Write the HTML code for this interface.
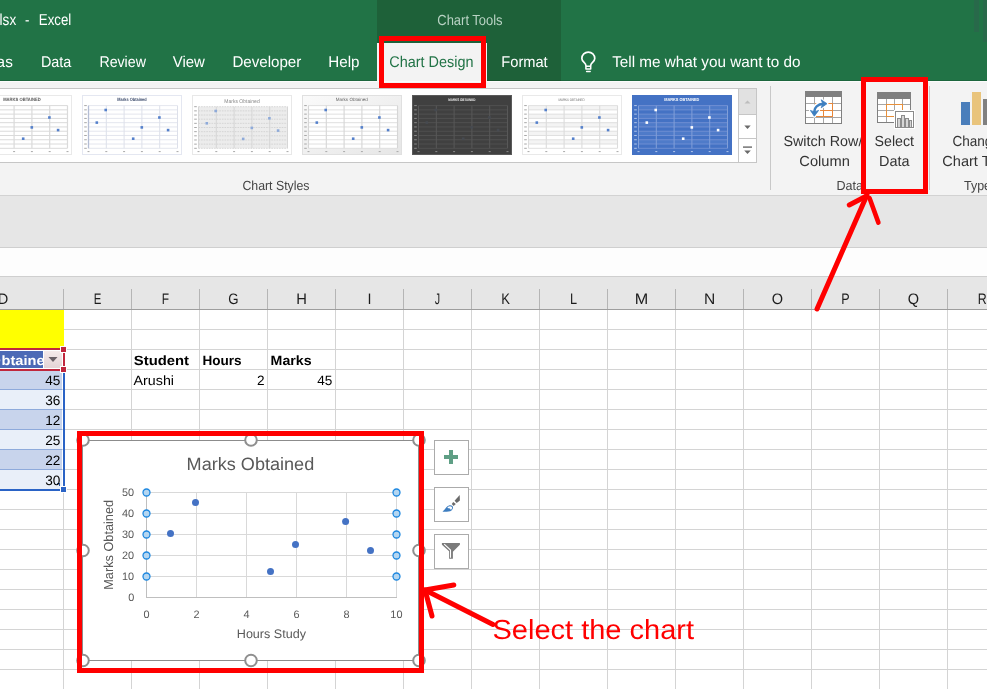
<!DOCTYPE html>
<html>
<head>
<meta charset="utf-8">
<title>Excel</title>
<style>
*{box-sizing:border-box;margin:0;padding:0}
html,body{width:987px;height:689px;overflow:hidden;background:#fff}
body{font-family:"Liberation Sans",sans-serif;position:relative;color:#222}
.abs{position:absolute}
svg text{text-rendering:geometricPrecision}
svg.abs{will-change:transform}
.t{position:absolute;white-space:nowrap;line-height:1;transform-origin:0 0}
#titlebar{left:0;top:0;width:987px;height:81px;background:#217346}
#charttools{left:377px;top:0;width:184px;height:81px;background:#1e6139}
#tabsel{left:377px;top:43px;width:110px;height:39px;background:#f3f3f3}
#ribbon{left:0;top:81px;width:987px;height:114px;background:#f3f3f3}
#ribbonline{left:0;top:195px;width:987px;height:1px;background:#d2d2d2}
#band{left:0;top:196px;width:987px;height:51px;background:#e6e6e6}
#fbar{left:0;top:247px;width:987px;height:30px;background:#fdfdfd;border-top:1px solid #cfcfcf;border-bottom:1px solid #cfcfcf}
#colhdr{left:0;top:277px;width:987px;height:32px;background:#e6e6e6}
#colhdrline{left:0;top:309px;width:987px;height:1px;background:#9e9e9e}
#grid{left:0;top:310px;width:987px;height:379px;background:#fff}
</style>
</head>
<body>
<div class="abs" id="titlebar"></div>
<div class="abs" id="charttools"></div>
<div class="abs" id="tabsel"></div>
<div class="abs" id="ribbon"></div>
<div class="abs" id="ribbonline"></div>
<div class="abs" id="band"></div>
<div class="abs" id="fbar"></div>
<div class="abs" id="colhdr"></div>
<div class="abs" id="colhdrline"></div>
<div class="abs" id="grid"></div>
<svg class="abs" style="left:0;top:0" width="987" height="689" viewBox="0 0 987 689" shape-rendering="crispEdges">
<g fill="#d4d4d4">
<rect x="63" y="310" width="1" height="379"/><rect x="131" y="310" width="1" height="379"/><rect x="199" y="310" width="1" height="379"/><rect x="267" y="310" width="1" height="379"/><rect x="335" y="310" width="1" height="379"/><rect x="403" y="310" width="1" height="379"/><rect x="471" y="310" width="1" height="379"/><rect x="539" y="310" width="1" height="379"/><rect x="607" y="310" width="1" height="379"/><rect x="675" y="310" width="1" height="379"/><rect x="743" y="310" width="1" height="379"/><rect x="811" y="310" width="1" height="379"/><rect x="879" y="310" width="1" height="379"/><rect x="947" y="310" width="1" height="379"/>
<rect x="0" y="329" width="987" height="1"/><rect x="0" y="349" width="987" height="1"/><rect x="0" y="369" width="987" height="1"/><rect x="0" y="389" width="987" height="1"/><rect x="0" y="409" width="987" height="1"/><rect x="0" y="429" width="987" height="1"/><rect x="0" y="449" width="987" height="1"/><rect x="0" y="469" width="987" height="1"/><rect x="0" y="489" width="987" height="1"/><rect x="0" y="509" width="987" height="1"/><rect x="0" y="529" width="987" height="1"/><rect x="0" y="549" width="987" height="1"/><rect x="0" y="569" width="987" height="1"/><rect x="0" y="589" width="987" height="1"/><rect x="0" y="609" width="987" height="1"/><rect x="0" y="629" width="987" height="1"/><rect x="0" y="649" width="987" height="1"/><rect x="0" y="669" width="987" height="1"/>
</g>
<g fill="#b5b5b5"><rect x="63" y="289" width="1" height="20"/><rect x="131" y="289" width="1" height="20"/><rect x="199" y="289" width="1" height="20"/><rect x="267" y="289" width="1" height="20"/><rect x="335" y="289" width="1" height="20"/><rect x="403" y="289" width="1" height="20"/><rect x="471" y="289" width="1" height="20"/><rect x="539" y="289" width="1" height="20"/><rect x="607" y="289" width="1" height="20"/><rect x="675" y="289" width="1" height="20"/><rect x="743" y="289" width="1" height="20"/><rect x="811" y="289" width="1" height="20"/><rect x="879" y="289" width="1" height="20"/><rect x="947" y="289" width="1" height="20"/></g>
</svg>

<svg class="abs" style="left:0;top:0" width="987" height="689" viewBox="0 0 987 689" font-family="Liberation Sans, sans-serif">
<defs><linearGradient id="ddg" x1="0" y1="0" x2="0" y2="1"><stop offset="0" stop-color="#f5eaea"/><stop offset="1" stop-color="#e4d4d6"/></linearGradient></defs>
<!-- yellow merged cell -->
<rect x="0" y="310" width="64" height="39" fill="#ffff00" shape-rendering="crispEdges"/>
<!-- table rows col D -->
<g shape-rendering="crispEdges">
<rect x="0" y="371" width="62" height="18" fill="#c8d4ec"/>
<rect x="0" y="389" width="62" height="1" fill="#8eaadb"/>
<rect x="0" y="390" width="62" height="19" fill="#e9eff9"/>
<rect x="0" y="409" width="62" height="1" fill="#8eaadb"/>
<rect x="0" y="410" width="62" height="19" fill="#c8d4ec"/>
<rect x="0" y="429" width="62" height="1" fill="#8eaadb"/>
<rect x="0" y="430" width="62" height="19" fill="#e9eff9"/>
<rect x="0" y="449" width="62" height="1" fill="#8eaadb"/>
<rect x="0" y="450" width="62" height="19" fill="#c8d4ec"/>
<rect x="0" y="469" width="62" height="1" fill="#8eaadb"/>
<rect x="0" y="470" width="62" height="19" fill="#e9eff9"/>
<!-- header cell -->
<rect x="0" y="350" width="63" height="20" fill="#ffffff"/>
<rect x="0" y="351" width="43" height="17" fill="#4c6ab6"/>
<rect x="44" y="351" width="18" height="17" fill="url(#ddg)"/>
<!-- crimson range outline -->
<rect x="0" y="348" width="62" height="2" fill="#c0273d"/>
<rect x="0" y="369" width="62" height="2" fill="#c0273d"/>
<rect x="63" y="353" width="2" height="13" fill="#c0273d"/>
<rect x="60" y="346" width="7" height="7" fill="#ffffff"/>
<rect x="61" y="347" width="5" height="5" fill="#c0273d"/>
<rect x="60" y="366" width="7" height="7" fill="#ffffff"/>
<rect x="61" y="367" width="5" height="5" fill="#c0273d"/>
<!-- blue range outline -->
<rect x="63" y="373" width="2" height="114" fill="#2a63c6"/>
<rect x="0" y="489" width="60" height="2" fill="#2a63c6"/>
<rect x="60" y="486" width="7" height="7" fill="#ffffff"/>
<rect x="61" y="487" width="5" height="5" fill="#2a63c6"/>
<path d="M57 483h3v3h-1v-2h-2z" fill="#2f5597"/>
</g>
<!-- dropdown arrow -->
<path d="M48.5 357 L57.5 357 L53 362 Z" fill="#6b6167"/>
<!-- header text -->
<clipPath id="hc"><rect x="0" y="351" width="43" height="17"/></clipPath>
<g clip-path="url(#hc)" font-size="13.5" font-weight="bold" fill="#ffffff"><text x="-8.6" y="364.7" textLength="9.2" lengthAdjust="spacingAndGlyphs">O</text><text x="1.6" y="364.7" textLength="43" lengthAdjust="spacingAndGlyphs">btaine</text></g>
<!-- numbers -->
<g font-size="13.6" fill="#000000" text-anchor="end">
<text x="60.4" y="384.8">45</text>
<text x="60.4" y="404.8">36</text>
<text x="60.4" y="424.8">12</text>
<text x="60.4" y="444.8">25</text>
<text x="60.4" y="464.8">22</text>
<text x="60.4" y="484.8">30</text>
<text x="264.5" y="384.8">2</text>
<text x="332.4" y="384.8">45</text>
</g>
<g font-size="13.4" fill="#000000">
<text x="133.8" y="364.6" font-weight="bold" textLength="55.2" lengthAdjust="spacingAndGlyphs">Student</text>
<text x="202.4" y="364.6" font-weight="bold" textLength="39.2" lengthAdjust="spacingAndGlyphs">Hours</text>
<text x="270.6" y="364.6" font-weight="bold" textLength="41" lengthAdjust="spacingAndGlyphs">Marks</text>
<text x="133.6" y="384.7" textLength="40.4" lengthAdjust="spacingAndGlyphs">Arushi</text>
</g>
<!-- column letters -->
<g font-size="15.2" fill="#1c1c1c" text-anchor="middle">
<text transform="translate(3 304.3) scale(0.960 1)">D</text>
<text transform="translate(97.5 304.3) scale(0.749 1)">E</text>
<text transform="translate(165.5 304.3) scale(0.788 1)">F</text>
<text transform="translate(233.5 304.3) scale(0.871 1)">G</text>
<text transform="translate(301.5 304.3) scale(0.970 1)">H</text>
<text transform="translate(369.5 304.3) scale(0.944 1)">I</text>
<text transform="translate(437.5 304.3) scale(0.705 1)">J</text>
<text transform="translate(505.5 304.3) scale(0.858 1)">K</text>
<text transform="translate(573.5 304.3) scale(0.836 1)">L</text>
<text transform="translate(641.5 304.3) scale(1.064 1)">M</text>
<text transform="translate(709.5 304.3) scale(1.022 1)">N</text>
<text transform="translate(777.5 304.3) scale(0.956 1)">O</text>
<text transform="translate(845.5 304.3) scale(0.829 1)">P</text>
<text transform="translate(913.5 304.3) scale(0.956 1)">Q</text>
<text transform="translate(982.3 304.3) scale(0.817 1)">R</text>
</g>
</svg>

<svg class="abs" style="left:0;top:0" width="987" height="689" viewBox="0 0 987 689" font-family="Liberation Sans, sans-serif">
<rect x="0" y="80" width="377" height="1" fill="#1c663d" shape-rendering="crispEdges"/>
<rect x="561" y="80" width="426" height="1" fill="#1c663d" shape-rendering="crispEdges"/>
<rect x="487" y="80" width="74" height="1" fill="#19552f" shape-rendering="crispEdges"/>
<!-- window control shading -->
<rect x="974" y="0" width="5" height="32" fill="#28694a" shape-rendering="crispEdges"/>
<rect x="983" y="0" width="4" height="42" fill="#28694a" shape-rendering="crispEdges"/>
<!-- title -->
<g font-size="15.8" fill="#ffffff">
<text x="-0.4" y="25" textLength="16.6" lengthAdjust="spacingAndGlyphs">lsx</text>
<text x="25" y="25" textLength="4.4" lengthAdjust="spacingAndGlyphs">-</text>
<text x="38.8" y="25" textLength="32.5" lengthAdjust="spacingAndGlyphs">Excel</text>
</g>
<text x="437.3" y="24.6" font-size="14.6" fill="#b9d3c4" textLength="65.3" lengthAdjust="spacingAndGlyphs">Chart Tools</text>
<!-- tabs -->
<g font-size="15.5" fill="#ffffff">
<text x="-3.4" y="66.8" textLength="16.2" lengthAdjust="spacingAndGlyphs">as</text>
<text x="40.9" y="66.8" textLength="30.4" lengthAdjust="spacingAndGlyphs">Data</text>
<text x="99.4" y="66.8" textLength="46.5" lengthAdjust="spacingAndGlyphs">Review</text>
<text x="172.8" y="66.8" textLength="32.1" lengthAdjust="spacingAndGlyphs">View</text>
<text x="232.4" y="66.8" textLength="68.9" lengthAdjust="spacingAndGlyphs">Developer</text>
<text x="328.3" y="66.8" textLength="31.2" lengthAdjust="spacingAndGlyphs">Help</text>
<text x="501.3" y="66.8" textLength="46.4" lengthAdjust="spacingAndGlyphs">Format</text>
<text x="612.2" y="66.8" textLength="188.4" lengthAdjust="spacingAndGlyphs">Tell me what you want to do</text>
</g>
<text x="389.3" y="66.6" font-size="15.5" fill="#217346" textLength="84.2" lengthAdjust="spacingAndGlyphs">Chart Design</text>
<!-- lightbulb -->
<g fill="none" stroke="#ffffff" stroke-linecap="round" stroke-linejoin="round">
<path d="M585.9 65.4 C585.9 62.6 581.85 62 581.85 58.5 A6.45 6.45 0 0 1 594.75 58.5 C594.75 62 590.7 62.6 590.7 65.4" stroke-width="1.7"/>
<rect x="585.9" y="66.2" width="4.8" height="2.8" stroke-width="1.5"/>
<path d="M586.6 71.5 H590.2" stroke-width="1.4"/>
</g>
</svg>

<svg class="abs" style="left:0;top:0" width="987" height="689" viewBox="0 0 987 689" font-family="Liberation Sans, sans-serif">
<g shape-rendering="crispEdges">
<!-- strip under green -->
<rect x="0" y="81" width="987" height="1" fill="#fbfbfb"/>
<!-- gallery box -->
<rect x="0" y="88" width="757" height="75" fill="#c6c6c6"/>
<rect x="0" y="89" width="738" height="73" fill="#ffffff"/>
<!-- scroll buttons -->
<rect x="739" y="89" width="17" height="25" fill="#e1e1e1"/>
<rect x="739" y="114" width="17" height="1" fill="#c6c6c6"/>
<rect x="739" y="115" width="17" height="23" fill="#ffffff"/>
<rect x="739" y="138" width="17" height="1" fill="#c6c6c6"/>
<rect x="739" y="139" width="17" height="23" fill="#ffffff"/>
<!-- group separators -->
<rect x="770" y="86" width="1" height="104" fill="#c8c8c8"/>
<rect x="929" y="86" width="1" height="104" fill="#c8c8c8"/>
</g>
<!-- scroll arrows -->
<path d="M744.5 103.5 L750.5 103.5 L747.5 100.5 Z" fill="#bdbdbd"/>
<path d="M744.3 125.5 L750.7 125.5 L747.5 129 Z" fill="#6a6a6a"/>
<rect x="743" y="146.4" width="9" height="1.4" fill="#6a6a6a"/>
<path d="M744.2 150.4 L750.8 150.4 L747.5 154 Z" fill="#6a6a6a"/>

<defs><linearGradient id="t4g" x1="0" y1="0" x2="1" y2="1"><stop offset="0" stop-color="#fafafa"/><stop offset="1" stop-color="#e6e6e6"/></linearGradient></defs>
<g>
<rect x="-27.5" y="95.5" width="99" height="59" fill="#ffffff" stroke="#e9e9e9" stroke-width="1"/>
<path d="M-21.5 105.60H67.5M-21.5 109.87H67.5M-21.5 114.14H67.5M-21.5 118.41H67.5M-21.5 122.68H67.5M-21.5 126.95H67.5M-21.5 131.22H67.5M-21.5 135.49H67.5M-21.5 139.76H67.5M-21.5 144.03H67.5M-21.5 148.30H67.5" stroke="#dadada" stroke-width="1.0" fill="none"/>
<path d="M-21.5 105.6V148.3M-3.7 105.6V148.3M14.1 105.6V148.3M31.9 105.6V148.3M49.7 105.6V148.3M67.5 105.6V148.3" stroke="#dadada" stroke-width="1.2" fill="none"/>
<path d="M-25.8 105.60h2.6M-25.8 109.87h2.6M-25.8 114.14h2.6M-25.8 118.41h2.6M-25.8 122.68h2.6M-25.8 126.95h2.6M-25.8 131.22h2.6M-25.8 135.49h2.6M-25.8 139.76h2.6M-25.8 144.03h2.6M-25.8 148.30h2.6M-22.5 151.6h2M-4.7 151.6h2M13.1 151.6h2M30.9 151.6h2M48.7 151.6h2M66.5 151.6h2" stroke="#a8a8a8" stroke-width="1" fill="none"/>
<rect x="-14.5" y="121.3" width="2.6" height="2.6" fill="#5580cb"/>
<rect x="-5.6" y="108.7" width="2.6" height="2.6" fill="#5580cb"/>
<rect x="21.9" y="137.4" width="2.6" height="2.6" fill="#5580cb"/>
<rect x="30.5" y="126.1" width="2.6" height="2.6" fill="#5580cb"/>
<rect x="48.1" y="116.2" width="2.6" height="2.6" fill="#5580cb"/>
<rect x="56.8" y="128.8" width="2.6" height="2.6" fill="#5580cb"/>
<text x="3.2" y="101.2" font-size="4.6" fill="#555555" font-weight="bold" textLength="37.5" lengthAdjust="spacingAndGlyphs">MARKS OBTAINED</text>
</g>
<g>
<rect x="82.5" y="95.5" width="99" height="59" fill="#ffffff" stroke="#e4e7f1" stroke-width="1"/>
<path d="M88.5 105.60H177.5M88.5 109.87H177.5M88.5 114.14H177.5M88.5 118.41H177.5M88.5 122.68H177.5M88.5 126.95H177.5M88.5 131.22H177.5M88.5 135.49H177.5M88.5 139.76H177.5M88.5 144.03H177.5M88.5 148.30H177.5" stroke="#dde0ea" stroke-width="0.8" fill="none"/>
<path d="M88.5 105.6V148.3M106.3 105.6V148.3M124.1 105.6V148.3M141.9 105.6V148.3M159.7 105.6V148.3M177.5 105.6V148.3" stroke="#dde0ea" stroke-width="1.0" fill="none"/>
<path d="M88.5 105.6V148.3" stroke="#b4bdd4" stroke-width="1.3" fill="none"/>
<path d="M84.2 105.60h2.6M84.2 109.87h2.6M84.2 114.14h2.6M84.2 118.41h2.6M84.2 122.68h2.6M84.2 126.95h2.6M84.2 131.22h2.6M84.2 135.49h2.6M84.2 139.76h2.6M84.2 144.03h2.6M84.2 148.30h2.6M87.5 151.6h2M105.3 151.6h2M123.1 151.6h2M140.9 151.6h2M158.7 151.6h2M176.5 151.6h2" stroke="#a8a8a8" stroke-width="1" fill="none"/>
<rect x="95.5" y="121.3" width="2.6" height="2.6" fill="#5580cb"/>
<rect x="104.4" y="108.7" width="2.6" height="2.6" fill="#5580cb"/>
<rect x="131.9" y="137.4" width="2.6" height="2.6" fill="#5580cb"/>
<rect x="140.5" y="126.1" width="2.6" height="2.6" fill="#5580cb"/>
<rect x="158.1" y="116.2" width="2.6" height="2.6" fill="#5580cb"/>
<rect x="166.8" y="128.8" width="2.6" height="2.6" fill="#5580cb"/>
<text x="117.3" y="101.2" font-size="4.6" fill="#3b4a6b" font-weight="bold" textLength="29.4" lengthAdjust="spacingAndGlyphs">Marks Obtained</text>
</g>
<g>
<rect x="192.5" y="95.5" width="99" height="59" fill="#ffffff" stroke="#e8e8e8" stroke-width="1"/>
<rect x="198.5" y="106.7" width="89.0" height="41.6" fill="#ececec"/>
<path d="M198.5 106.70H287.5M198.5 110.86H287.5M198.5 115.02H287.5M198.5 119.18H287.5M198.5 123.34H287.5M198.5 127.50H287.5M198.5 131.66H287.5M198.5 135.82H287.5M198.5 139.98H287.5M198.5 144.14H287.5M198.5 148.30H287.5" stroke="#cecece" stroke-width="0.8" fill="none" stroke-dasharray="1.6 1"/>
<path d="M198.5 106.7V148.3M216.3 106.7V148.3M234.1 106.7V148.3M251.9 106.7V148.3M269.7 106.7V148.3M287.5 106.7V148.3" stroke="#d6d6d6" stroke-width="1.0" fill="none"/>
<path d="M194.2 106.70h2.6M194.2 110.86h2.6M194.2 115.02h2.6M194.2 119.18h2.6M194.2 123.34h2.6M194.2 127.50h2.6M194.2 131.66h2.6M194.2 135.82h2.6M194.2 139.98h2.6M194.2 144.14h2.6M194.2 148.30h2.6M197.5 151.6h2M215.3 151.6h2M233.1 151.6h2M250.9 151.6h2M268.7 151.6h2M286.5 151.6h2" stroke="#a8a8a8" stroke-width="1" fill="none"/>
<rect x="205.5" y="122.0" width="2.6" height="2.6" fill="#8eaad9"/>
<rect x="214.4" y="109.7" width="2.6" height="2.6" fill="#8eaad9"/>
<rect x="241.9" y="137.6" width="2.6" height="2.6" fill="#8eaad9"/>
<rect x="250.5" y="126.6" width="2.6" height="2.6" fill="#8eaad9"/>
<rect x="268.1" y="117.0" width="2.6" height="2.6" fill="#8eaad9"/>
<rect x="276.8" y="129.3" width="2.6" height="2.6" fill="#8eaad9"/>
<text x="224.3" y="102.9" font-size="5.4" fill="#8a8a8a" textLength="35.4" lengthAdjust="spacingAndGlyphs">Marks Obtained</text>
</g>
<g>
<rect x="302.5" y="95.5" width="99" height="59" fill="url(#t4g)" stroke="#e0e0e0" stroke-width="1"/>
<rect x="308.5" y="105.6" width="89.0" height="42.7" fill="#ffffff"/>
<path d="M308.5 105.60H397.5M308.5 109.87H397.5M308.5 114.14H397.5M308.5 118.41H397.5M308.5 122.68H397.5M308.5 126.95H397.5M308.5 131.22H397.5M308.5 135.49H397.5M308.5 139.76H397.5M308.5 144.03H397.5M308.5 148.30H397.5" stroke="#dcdcdc" stroke-width="0.9" fill="none"/>
<path d="M308.5 105.6V148.3M326.3 105.6V148.3M344.1 105.6V148.3M361.9 105.6V148.3M379.7 105.6V148.3M397.5 105.6V148.3" stroke="#d6d6d6" stroke-width="1.1" fill="none"/>
<path d="M304.2 105.60h2.6M304.2 109.87h2.6M304.2 114.14h2.6M304.2 118.41h2.6M304.2 122.68h2.6M304.2 126.95h2.6M304.2 131.22h2.6M304.2 135.49h2.6M304.2 139.76h2.6M304.2 144.03h2.6M304.2 148.30h2.6M307.5 151.6h2M325.3 151.6h2M343.1 151.6h2M360.9 151.6h2M378.7 151.6h2M396.5 151.6h2" stroke="#a8a8a8" stroke-width="1" fill="none"/>
<rect x="315.5" y="121.3" width="2.6" height="2.6" fill="#5580cb"/>
<rect x="324.4" y="108.7" width="2.6" height="2.6" fill="#5580cb"/>
<rect x="351.9" y="137.4" width="2.6" height="2.6" fill="#5580cb"/>
<rect x="360.5" y="126.1" width="2.6" height="2.6" fill="#5580cb"/>
<rect x="378.1" y="116.2" width="2.6" height="2.6" fill="#5580cb"/>
<rect x="386.8" y="128.8" width="2.6" height="2.6" fill="#5580cb"/>
<text x="335.8" y="101.2" font-size="4.6" fill="#666666" textLength="32.0" lengthAdjust="spacingAndGlyphs">Marks Obtained</text>
</g>
<g>
<rect x="412.5" y="95.5" width="99" height="59" fill="#404040" stroke="#5a5a5a" stroke-width="1"/>
<path d="M418.5 105.60H507.5M418.5 109.87H507.5M418.5 114.14H507.5M418.5 118.41H507.5M418.5 122.68H507.5M418.5 126.95H507.5M418.5 131.22H507.5M418.5 135.49H507.5M418.5 139.76H507.5M418.5 144.03H507.5M418.5 148.30H507.5" stroke="#545454" stroke-width="0.8" fill="none"/>
<path d="M418.5 105.6V148.3M436.3 105.6V148.3M454.1 105.6V148.3M471.9 105.6V148.3M489.7 105.6V148.3M507.5 105.6V148.3" stroke="#585858" stroke-width="1.0" fill="none"/>
<path d="M414.2 105.60h2.6M414.2 109.87h2.6M414.2 114.14h2.6M414.2 118.41h2.6M414.2 122.68h2.6M414.2 126.95h2.6M414.2 131.22h2.6M414.2 135.49h2.6M414.2 139.76h2.6M414.2 144.03h2.6M414.2 148.30h2.6M417.5 151.6h2M435.3 151.6h2M453.1 151.6h2M470.9 151.6h2M488.7 151.6h2M506.5 151.6h2" stroke="#8a8a8a" stroke-width="1" fill="none"/>
<rect x="425.5" y="121.3" width="2.6" height="2.6" fill="#464a50"/>
<rect x="434.4" y="108.7" width="2.6" height="2.6" fill="#464a50"/>
<rect x="461.9" y="137.4" width="2.6" height="2.6" fill="#464a50"/>
<rect x="470.5" y="126.1" width="2.6" height="2.6" fill="#464a50"/>
<rect x="488.1" y="116.2" width="2.6" height="2.6" fill="#464a50"/>
<rect x="496.8" y="128.8" width="2.6" height="2.6" fill="#464a50"/>
<text x="448.2" y="101.4" font-size="3.8" fill="#f0f0f0" font-weight="bold" textLength="27.1" lengthAdjust="spacingAndGlyphs">MARKS OBTAINED</text>
</g>
<g>
<rect x="522.5" y="95.5" width="99" height="59" fill="#ffffff" stroke="#e9e9e9" stroke-width="1"/>
<rect x="528.5" y="105.60" width="89.0" height="4.27" fill="#f4f4f4"/>
<rect x="528.5" y="114.14" width="89.0" height="4.27" fill="#f4f4f4"/>
<rect x="528.5" y="122.68" width="89.0" height="4.27" fill="#f4f4f4"/>
<rect x="528.5" y="131.22" width="89.0" height="4.27" fill="#f4f4f4"/>
<rect x="528.5" y="139.76" width="89.0" height="4.27" fill="#f4f4f4"/>
<path d="M528.5 105.60H617.5M528.5 109.87H617.5M528.5 114.14H617.5M528.5 118.41H617.5M528.5 122.68H617.5M528.5 126.95H617.5M528.5 131.22H617.5M528.5 135.49H617.5M528.5 139.76H617.5M528.5 144.03H617.5M528.5 148.30H617.5" stroke="#dcdcdc" stroke-width="0.9" fill="none"/>
<path d="M528.5 105.6V148.3M546.3 105.6V148.3M564.1 105.6V148.3M581.9 105.6V148.3M599.7 105.6V148.3M617.5 105.6V148.3" stroke="#dcdcdc" stroke-width="1.1" fill="none"/>
<path d="M524.2 105.60h2.6M524.2 109.87h2.6M524.2 114.14h2.6M524.2 118.41h2.6M524.2 122.68h2.6M524.2 126.95h2.6M524.2 131.22h2.6M524.2 135.49h2.6M524.2 139.76h2.6M524.2 144.03h2.6M524.2 148.30h2.6M527.5 151.6h2M545.3 151.6h2M563.1 151.6h2M580.9 151.6h2M598.7 151.6h2M616.5 151.6h2" stroke="#a8a8a8" stroke-width="1" fill="none"/>
<rect x="535.5" y="121.3" width="2.6" height="2.6" fill="#5580cb"/>
<rect x="544.4" y="108.7" width="2.6" height="2.6" fill="#5580cb"/>
<rect x="571.9" y="137.4" width="2.6" height="2.6" fill="#5580cb"/>
<rect x="580.5" y="126.1" width="2.6" height="2.6" fill="#5580cb"/>
<rect x="598.1" y="116.2" width="2.6" height="2.6" fill="#5580cb"/>
<rect x="606.8" y="128.8" width="2.6" height="2.6" fill="#5580cb"/>
<text x="558.5" y="101.3" font-size="3.6" fill="#6a6a6a" textLength="26.2" lengthAdjust="spacingAndGlyphs">MARKS OBTAINED</text>
</g>
<g>
<rect x="632.5" y="95.5" width="99" height="59" fill="#4472c4" stroke="#4472c4" stroke-width="1"/>
<rect x="638.5" y="105.60" width="89.0" height="4.27" fill="#4f7bc9"/>
<rect x="638.5" y="114.14" width="89.0" height="4.27" fill="#4f7bc9"/>
<rect x="638.5" y="122.68" width="89.0" height="4.27" fill="#4f7bc9"/>
<rect x="638.5" y="131.22" width="89.0" height="4.27" fill="#4f7bc9"/>
<rect x="638.5" y="139.76" width="89.0" height="4.27" fill="#4f7bc9"/>
<path d="M638.5 105.60H727.5M638.5 109.87H727.5M638.5 114.14H727.5M638.5 118.41H727.5M638.5 122.68H727.5M638.5 126.95H727.5M638.5 131.22H727.5M638.5 135.49H727.5M638.5 139.76H727.5M638.5 144.03H727.5M638.5 148.30H727.5" stroke="#7896d5" stroke-width="0.8" fill="none"/>
<path d="M638.5 105.6V148.3M656.3 105.6V148.3M674.1 105.6V148.3M691.9 105.6V148.3M709.7 105.6V148.3M727.5 105.6V148.3" stroke="#819fd9" stroke-width="1.0" fill="none"/>
<path d="M634.2 105.60h2.6M634.2 109.87h2.6M634.2 114.14h2.6M634.2 118.41h2.6M634.2 122.68h2.6M634.2 126.95h2.6M634.2 131.22h2.6M634.2 135.49h2.6M634.2 139.76h2.6M634.2 144.03h2.6M634.2 148.30h2.6M637.5 151.6h2M655.3 151.6h2M673.1 151.6h2M690.9 151.6h2M708.7 151.6h2M726.5 151.6h2" stroke="#b4c7ea" stroke-width="1" fill="none"/>
<rect x="645.5" y="121.3" width="2.6" height="2.6" fill="#ffffff"/>
<rect x="654.4" y="108.7" width="2.6" height="2.6" fill="#ffffff"/>
<rect x="681.9" y="137.4" width="2.6" height="2.6" fill="#ffffff"/>
<rect x="690.5" y="126.1" width="2.6" height="2.6" fill="#ffffff"/>
<rect x="708.1" y="116.2" width="2.6" height="2.6" fill="#ffffff"/>
<rect x="716.8" y="128.8" width="2.6" height="2.6" fill="#ffffff"/>
<text x="664.3" y="101.2" font-size="4.4" fill="#ffffff" font-weight="bold" textLength="35.0" lengthAdjust="spacingAndGlyphs">MARKS OBTAINED</text>
</g>

<!-- labels -->
<g font-size="13.2" fill="#444444">
<text x="242.4" y="189.9" textLength="67.1" lengthAdjust="spacingAndGlyphs">Chart Styles</text>
<text x="836.4" y="189.7" textLength="26.5" lengthAdjust="spacingAndGlyphs">Data</text>
<text x="964" y="189.5" textLength="27" lengthAdjust="spacingAndGlyphs">Type</text>
</g>
<g font-size="14.6" fill="#333333">
<text x="783.4" y="145.6" textLength="79" lengthAdjust="spacingAndGlyphs">Switch Row/</text>
<text x="799.3" y="165.5" textLength="50.5" lengthAdjust="spacingAndGlyphs">Column</text>
<text x="874.5" y="145.6" textLength="39.5" lengthAdjust="spacingAndGlyphs">Select</text>
<text x="879" y="165.7" textLength="30.5" lengthAdjust="spacingAndGlyphs">Data</text>
<text x="952.4" y="145.6" textLength="47.5" lengthAdjust="spacingAndGlyphs">Change</text>
<text x="942.3" y="165.7" textLength="71" lengthAdjust="spacingAndGlyphs">Chart Type</text>
</g>
<!-- Switch Row/Column icon -->
<g shape-rendering="crispEdges">
<rect x="805" y="91" width="37" height="33" fill="#808080"/>
<rect x="806" y="97" width="35" height="26" fill="#ffffff"/>
<g fill="#a6a6a6">
<rect x="814" y="97" width="1" height="26"/><rect x="823" y="97" width="1" height="26"/><rect x="832" y="97" width="1" height="26"/>
<rect x="806" y="103" width="35" height="1"/><rect x="806" y="110" width="35" height="1"/><rect x="806" y="117" width="35" height="1"/>
</g>
<g fill="#e8873a">
<rect x="815" y="103" width="18" height="1"/><rect x="832" y="103" width="1" height="14"/><rect x="816" y="116" width="17" height="1"/><rect x="823" y="110" width="1" height="7"/><rect x="820" y="110" width="13" height="1"/>
</g>
</g>
<g fill="#ffffff" stroke="#ffffff" stroke-linejoin="round">
<path d="M814.2 112 C814.2 107.5 817.8 104.2 823.5 103.9" fill="none" stroke-width="6"/>
<path d="M821.2 99.8 L827 103.7 L821.2 107.8 L822.8 103.8 Z" stroke-width="3"/>
<path d="M810.4 110.4 L814.3 116.2 L818.6 110.4 L814.4 111.9 Z" stroke-width="3"/>
</g>
<path d="M814.2 112 C814.2 107.5 817.8 104.2 823.5 103.9" fill="none" stroke="#3e7fc0" stroke-width="2.6"/>
<path d="M821.2 99.8 L827 103.7 L821.2 107.8 L822.8 103.8 Z" fill="#3e7fc0" stroke="#3e7fc0" stroke-width="0.8" stroke-linejoin="round"/>
<path d="M810.4 110.4 L814.3 116.2 L818.6 110.4 L814.4 111.9 Z" fill="#3e7fc0" stroke="#3e7fc0" stroke-width="0.8" stroke-linejoin="round"/>
<!-- Select Data icon -->
<g shape-rendering="crispEdges">
<rect x="877" y="92" width="34" height="31" fill="#808080"/>
<rect x="878" y="99" width="32" height="23" fill="#ffffff"/>
<g fill="#a6a6a6">
<rect x="886" y="99" width="1" height="23"/><rect x="894" y="99" width="1" height="23"/><rect x="902" y="99" width="1" height="23"/>
<rect x="878" y="104" width="32" height="1"/><rect x="878" y="110" width="32" height="1"/><rect x="878" y="116" width="32" height="1"/>
</g>
<g fill="#e8903a">
<rect x="886" y="104" width="17" height="1"/><rect x="886" y="104" width="1" height="13"/><rect x="886" y="116" width="9" height="1"/><rect x="902" y="104" width="1" height="6"/>
</g>
<rect x="894" y="110" width="21" height="19" fill="#ffffff"/>
<rect x="895" y="111" width="19" height="17" fill="#8a8a8a"/>
<rect x="896" y="112" width="17" height="15" fill="#ffffff"/>
<g fill="#8c8c8c">
<rect x="897" y="118" width="4" height="9"/><rect x="901" y="115" width="4" height="12"/><rect x="905" y="118" width="4" height="9"/><rect x="909" y="120" width="3" height="7"/>
</g>
<g fill="#d6d6d6">
<rect x="898" y="119" width="2" height="8"/><rect x="902" y="116" width="2" height="11"/><rect x="906" y="119" width="2" height="8"/><rect x="910" y="121" width="1" height="6"/>
</g>
<!-- Change chart type icon -->
<rect x="961" y="102" width="9" height="23" fill="#4a7ebb"/>
<rect x="972" y="92" width="9" height="33" fill="#e9c47c"/>
<rect x="983" y="99" width="4" height="26" fill="#808080"/>
</g>
</svg>
<svg class="abs" style="left:0;top:0" width="987" height="689" viewBox="0 0 987 689" font-family="Liberation Sans, sans-serif">
<!-- chart area -->
<g shape-rendering="crispEdges">
<rect x="82" y="440" width="337" height="221" fill="#8c8c8c"/>
<rect x="83" y="441" width="335" height="219" fill="#ffffff"/>
<!-- gridlines -->
<g fill="#d9d9d9">
<rect x="147" y="492" width="250" height="1"/><rect x="147" y="513" width="250" height="1"/><rect x="147" y="534" width="250" height="1"/><rect x="147" y="555" width="250" height="1"/><rect x="147" y="576" width="250" height="1"/>
<rect x="196" y="492" width="1" height="105"/><rect x="246" y="492" width="1" height="105"/><rect x="296" y="492" width="1" height="105"/><rect x="346" y="492" width="1" height="105"/><rect x="396" y="492" width="1" height="105"/>
</g>
<rect x="146" y="492" width="1" height="106" fill="#bfbfbf"/>
<rect x="146" y="597" width="251" height="1" fill="#bfbfbf"/>
</g>
<!-- data points -->
<g fill="#4472c4">
<circle cx="170.5" cy="533.6" r="3.5"/><circle cx="195.5" cy="502.5" r="3.5"/><circle cx="270.5" cy="571.6" r="3.5"/><circle cx="295.5" cy="544.5" r="3.5"/><circle cx="345.6" cy="521.5" r="3.5"/><circle cx="370.5" cy="550.5" r="3.5"/>
</g>
<!-- axis selection handles -->
<g fill="#b5d6f0" stroke="#1e88e0" stroke-width="1.3">
<circle cx="146.5" cy="492.5" r="3.5"/><circle cx="146.5" cy="513.5" r="3.5"/><circle cx="146.5" cy="534.5" r="3.5"/><circle cx="146.5" cy="555.5" r="3.5"/><circle cx="146.5" cy="576.5" r="3.5"/>
<circle cx="396.5" cy="492.5" r="3.5"/><circle cx="396.5" cy="513.5" r="3.5"/><circle cx="396.5" cy="534.5" r="3.5"/><circle cx="396.5" cy="555.5" r="3.5"/><circle cx="396.5" cy="576.5" r="3.5"/>
</g>
<!-- chart text -->
<text x="186.6" y="469.6" font-size="17.8" fill="#595959" textLength="127.6" lengthAdjust="spacingAndGlyphs">Marks Obtained</text>
<g font-size="10.9" fill="#595959" text-anchor="end">
<text x="134.2" y="496.2">50</text><text x="134.2" y="517.2">40</text><text x="134.2" y="538.2">30</text><text x="134.2" y="559.2">20</text><text x="134.2" y="580.2">10</text><text x="134.2" y="601.2">0</text>
</g>
<g font-size="10.9" fill="#595959" text-anchor="middle">
<text x="146.5" y="617.7">0</text><text x="196.5" y="617.7">2</text><text x="246.6" y="617.7">4</text><text x="296.5" y="617.7">6</text><text x="346.5" y="617.7">8</text><text x="396.4" y="617.7">10</text>
</g>
<text x="236.8" y="637.7" font-size="12.5" fill="#595959" textLength="69.2" lengthAdjust="spacingAndGlyphs">Hours Study</text>
<text transform="translate(113.3 589.8) rotate(-90)" font-size="13" fill="#595959" textLength="89.9" lengthAdjust="spacingAndGlyphs">Marks Obtained</text>
<!-- chart buttons -->
<g shape-rendering="crispEdges">
<rect x="434" y="440" width="35" height="35" fill="#ababab"/><rect x="435" y="441" width="33" height="33" fill="#ffffff"/>
<rect x="434" y="487" width="35" height="35" fill="#ababab"/><rect x="435" y="488" width="33" height="33" fill="#ffffff"/>
<rect x="434" y="534" width="35" height="35" fill="#ababab"/><rect x="435" y="535" width="33" height="33" fill="#ffffff"/>
<rect x="444" y="455" width="14" height="4" fill="#5f9f85"/><rect x="449" y="450" width="4" height="14" fill="#5f9f85"/>
</g>
<!-- brush -->
<path d="M459.7 494.9 L459.9 500.5 L456.7 503.1 L454.6 500.7 Z" fill="#6a6a6a"/>
<path d="M453.2 502.1 L455.8 503.9 L453.6 505.9 L451.8 503.9 Z" fill="#6a6a6a"/>
<path d="M442.5 511.7 C445 509.5 446.5 506 449.5 505.2 C451.8 504.8 453.3 506.3 453 508 C452.6 510 451 511.3 448.5 511.6 C446.5 511.9 444 511.9 442.5 511.7 Z" fill="#3d7dc0"/>
<path d="M448 506.8 C449.3 505.9 451.3 506 452 507.2 C452.3 508.3 451.7 509.3 450.7 509.8 L449.9 508.4 L447.4 508 Z" fill="#ffffff"/>
<!-- funnel -->
<path d="M441.9 543 H459.9 V544.7 L452.9 551.7 V558.7 H449.1 V551.2 L441.9 544.7 Z" fill="#7b7b7b"/>
<path d="M444.2 544.2 L450.5 550 V557.8" fill="none" stroke="#ffffff" stroke-width="1.1"/>
<!-- chart frame handles -->
<g fill="#ffffff" stroke="#8f8f8f" stroke-width="2">
<circle cx="83" cy="440" r="5.8"/><circle cx="251" cy="440" r="5.8"/><circle cx="419" cy="440" r="5.8"/>
<circle cx="83" cy="550.5" r="5.8"/><circle cx="419" cy="550.5" r="5.8"/>
<circle cx="83" cy="660.5" r="5.8"/><circle cx="251" cy="660.5" r="5.8"/><circle cx="419" cy="660.5" r="5.8"/>
</g>
</svg>
<svg class="abs" style="left:0;top:0" width="987" height="689" viewBox="0 0 987 689" font-family="Liberation Sans, sans-serif">
<g fill="none" stroke="#ff0000" stroke-width="5" shape-rendering="crispEdges">
<rect x="381.5" y="38.5" width="102" height="47"/>
<rect x="863.5" y="79.5" width="62" height="112"/>
<rect x="79.5" y="433.5" width="342" height="237"/>
</g>
<g fill="none" stroke="#ff0000" stroke-width="5" stroke-linecap="round" stroke-linejoin="round">
<path d="M493 624.5 L425 590"/>
<path d="M453.8 585 L425 590 L432 616"/>
<path d="M817 309 L867 195"/>
<path d="M849.3 205 L866.5 196"/><path d="M869.6 198.2 L878.4 222.6" stroke-width="4.6"/>
</g>
<text x="492.5" y="639.3" font-size="27.6" fill="#ff0000" textLength="201.5" lengthAdjust="spacingAndGlyphs">Select the chart</text>
</svg>
</body>
</html>
